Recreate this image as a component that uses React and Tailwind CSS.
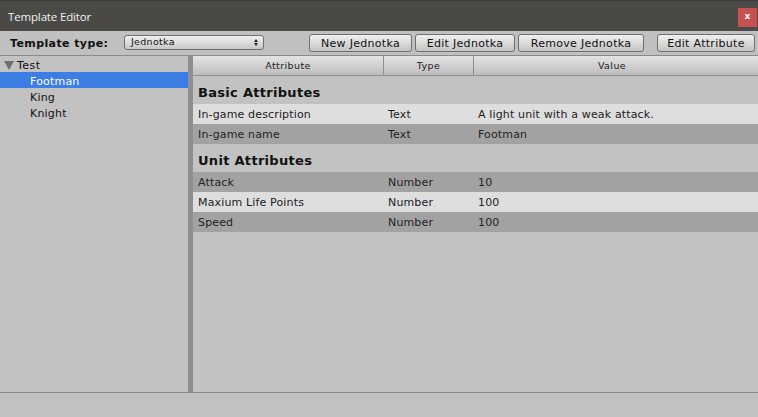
const btn =
  "h-[18px] pt-[1px] rounded-[3px] border border-[#707070] bg-gradient-to-b from-[#f0f0f0] to-[#c4c4c4] text-[11px] text-[#111] tracking-[0.3px] leading-none flex items-center justify-center";

const col = "h-full pt-[2px] flex items-center justify-center border-r border-[#8f8f8f] text-[9.5px] text-[#222] tracking-[0.4px]";

const treeItem = "h-4 pt-[4px] flex items-center pl-[30px]";

function Row({ name, type, value, light }) {
  return (
    <div
      className={
        "h-5 pt-[2px] flex items-center text-[11px] text-[#222] tracking-[0.15px] " +
        (light ? "bg-[#dedede]" : "bg-[#a2a2a2]")
      }
    >
      <div className="w-[195px] pl-[5px]">{name}</div>
      <div className="w-[90px]">{type}</div>
      <div>{value}</div>
    </div>
  );
}

function Section({ title }) {
  return (
    <div className="h-7 flex items-center pl-[5px] pt-[6px] text-[13px] font-bold text-[#111] tracking-[0.3px]">
      {title}
    </div>
  );
}

export default function App() {
  return (
    <div className="w-[758px] h-[417px] flex flex-col bg-[#c2c2c2] overflow-hidden font-['DejaVu_Sans',sans-serif]">
      <div className="h-[31px] shrink-0 flex items-start justify-between bg-[#4b4946] border-t border-[#3c3c3c]">
        <span className="mt-[7px] ml-[8px] text-[11.5px] tracking-[-0.15px] text-[#f0f0f0] font-['Open_Sans',sans-serif]">
          Template Editor
        </span>
        <div className="mt-[7px] mr-[1px] w-[19px] h-[19px] bg-[#c75050] flex items-center justify-center text-[9px] font-bold text-white pb-[1px]">
          x
        </div>
      </div>

      <div className="h-[24px] shrink-0 flex items-center pl-[10px] pb-[1px] bg-[#c0c0c0]">
        <span className="w-[114px] pt-[3px] text-[11px] font-bold text-[#111] tracking-[0.4px]">Template type:</span>
        <div className="w-[140px] h-[15px] pl-[6px] pr-[5px] flex items-center justify-between rounded-[3px] border border-[#707070] bg-gradient-to-b from-[#f0f0f0] to-[#c8c8c8] text-[9.5px] text-[#111] tracking-[0.3px]">
          <span>Jednotka</span>
          <span className="flex flex-col gap-[1px]">
            <span className="w-0 h-0 border-x-[2px] border-x-transparent border-b-[3px] border-b-[#222]"></span>
            <span className="w-0 h-0 border-x-[2px] border-x-transparent border-t-[3px] border-t-[#222]"></span>
          </span>
        </div>
        <div className="flex ml-[45px] gap-[3px]">
          <div className={btn + " w-[103px]"}>New Jednotka</div>
          <div className={btn + " w-[100px]"}>Edit Jednotka</div>
          <div className={btn + " w-[126px]"}>Remove Jednotka</div>
          <div className={btn + " w-[98px] ml-[10px]"}>Edit Attribute</div>
        </div>
      </div>

      <div className="flex-1 flex border-t border-[#8a8a8a] min-h-0">
        <div className="w-[188px] text-[11px] text-[#111] tracking-[0.2px]">
          <div className="h-4 pt-[4px] flex items-center pl-[4px]">
            <span className="w-0 h-0 -mt-[1px] border-x-[5px] border-x-transparent border-t-[9px] border-t-[#6e6e6e] mr-[3px]"></span>
            <span className="tracking-[0.5px]">Test</span>
          </div>
          <div className={treeItem + " bg-[#3d7de6] text-white"}>Footman</div>
          <div className={treeItem}>King</div>
          <div className={treeItem}>Knight</div>
        </div>

        <div className="w-[5px] bg-[#8f8f8f]"></div>

        <div className="flex-1 flex flex-col">
          <div className="h-5 flex border-b border-[#8f8f8f] bg-gradient-to-b from-[#e4e4e4] to-[#bdbdbd]">
            <div className={col + " w-[191px]"}>Attribute</div>
            <div className={col + " w-[90px]"}>Type</div>
            <div className={col + " flex-1 border-r-0 pr-[8px]"}>Value</div>
          </div>
          <Section title="Basic Attributes" />
          <Row name="In-game description" type="Text" value="A light unit with a weak attack." light />
          <Row name="In-game name" type="Text" value="Footman" />
          <Section title="Unit Attributes" />
          <Row name="Attack" type="Number" value="10" />
          <Row name="Maxium Life Points" type="Number" value="100" light />
          <Row name="Speed" type="Number" value="100" />
        </div>
      </div>

      <div className="h-[25px] shrink-0 border-t border-[#8a8a8a] bg-[#c2c2c2]"></div>
    </div>
  );
}
